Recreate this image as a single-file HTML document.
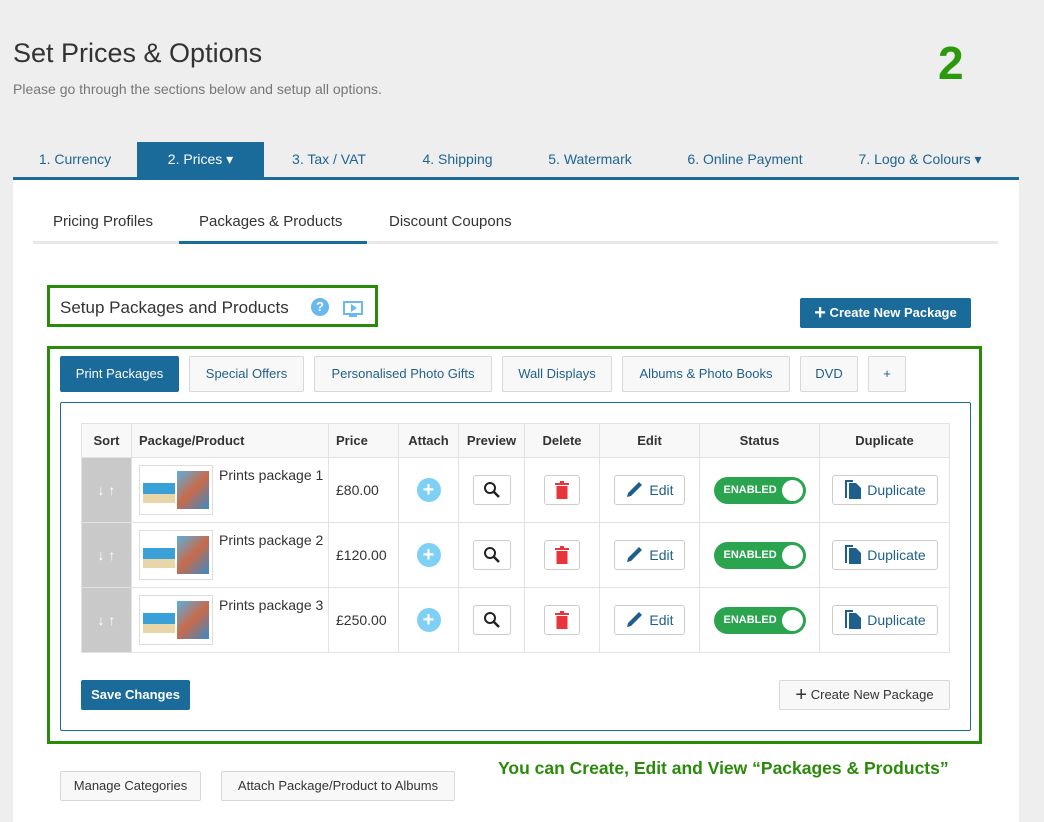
<!DOCTYPE html>
<html><head><meta charset="utf-8"><style>
*{box-sizing:border-box;margin:0;padding:0}
body{width:1044px;height:822px;background:#eeeeee;font-family:"Liberation Sans",sans-serif;position:relative;overflow:hidden;color:#333}
.a{position:absolute}
.tab{position:absolute;top:142px;height:36px;line-height:34px;font-size:14px;color:#1f6493;text-align:center}
.sub{position:absolute;top:212px;font-size:15px;color:#333}
.btn{position:absolute;border:1px solid #d5d8dc;background:#f8f8f8;font-size:13px;color:#1f5f8b;text-align:center;border-radius:2px}
table{border-collapse:collapse;position:absolute;left:81px;top:423px;width:869px}
td,th{border:1px solid #dfe2e6;font-size:13px;text-align:center}
th{height:34px;background:#f8f8f8;color:#333;font-weight:bold}
td{height:65px;background:#fff}
td.s{background:#c9c9c9;color:#fff;font-size:14px}
.wb{display:inline-block;border:1px solid #ccc;border-radius:3px;background:#fff;height:30px;vertical-align:middle;line-height:28px;color:#1f5f8b;font-size:14px}
.tog{display:inline-block;width:92px;height:27px;border-radius:14px;background:#2aa44f;color:#fff;font-size:11px;font-weight:bold;line-height:27px;text-align:left;padding-left:10px;position:relative;vertical-align:middle}
.tog:after{content:"";position:absolute;right:3px;top:3px;width:21px;height:21px;border-radius:50%;background:#fff}
.thumb{position:absolute;left:7px;top:7px;width:74px;height:50px;border:1px solid #ddd;background:#fff}
</style></head><body>
<div class="a" style="left:13px;top:38px;font-size:27px;color:#333">Set Prices &amp; Options</div>
<div class="a" style="left:13px;top:81px;font-size:14px;color:#777">Please go through the sections below and setup all options.</div>
<div class="a" style="left:938px;top:36px;font-size:46px;font-weight:bold;color:#2a9a0a">2</div>

<div class="a" style="left:13px;top:180px;width:1006px;height:642px;background:#fff"></div>
<div class="a" style="left:13px;top:177px;width:1006px;height:3px;background:#1a6a9a"></div>
<div class="tab" style="left:20px;width:110px">1. Currency</div>
<div class="tab" style="left:137px;width:127px;background:#1a6a9a;color:#fff">2. Prices ▾</div>
<div class="tab" style="left:275px;width:108px">3. Tax / VAT</div>
<div class="tab" style="left:405px;width:105px">4. Shipping</div>
<div class="tab" style="left:530px;width:120px">5. Watermark</div>
<div class="tab" style="left:670px;width:150px">6. Online Payment</div>
<div class="tab" style="left:845px;width:150px">7. Logo &amp; Colours ▾</div>

<div class="a" style="left:33px;top:241px;width:965px;height:3px;background:#e8e8e8"></div>
<div class="a" style="left:179px;top:241px;width:188px;height:3px;background:#1a6a9a"></div>
<div class="sub" style="left:53px;top:213px">Pricing Profiles</div>
<div class="sub" style="left:199px;top:213px">Packages &amp; Products</div>
<div class="sub" style="left:389px;top:213px">Discount Coupons</div>

<div class="a" style="left:47px;top:285px;width:331px;height:42px;border:3px solid #2a8a0a"></div>
<div class="a" style="left:60px;top:298px;font-size:17px;color:#333">Setup Packages and Products</div>
<div class="a" style="left:311px;top:298px;width:18px;height:18px;border-radius:50%;background:#6ab8f0;color:#fff;font-size:13px;font-weight:bold;text-align:center;line-height:18px">?</div>
<div class="a" style="left:343px;top:301px;width:20px;height:14px;border:2px solid #6ab8f0"></div>
<div class="a" style="left:351px;top:304px;width:0;height:0;border-left:6px solid #6ab8f0;border-top:4px solid transparent;border-bottom:4px solid transparent"></div>
<div class="a" style="left:349px;top:315px;width:8px;height:2px;background:#6ab8f0"></div>
<div class="a" style="left:800px;top:298px;width:171px;height:30px;background:#1a6a9a;color:#fff;font-size:13px;font-weight:bold;line-height:30px;text-align:center;border-radius:2px"><span style="font-size:20px;vertical-align:-2px">+</span> Create New Package</div>

<div class="a" style="left:47px;top:346px;width:935px;height:398px;border:3px solid #2a8a0a"></div>
<div class="btn" style="left:60px;top:356px;width:119px;height:36px;line-height:34px;background:#1a6a9a;color:#fff;border-color:#1a6a9a">Print Packages</div>
<div class="btn" style="left:189px;top:356px;width:115px;height:36px;line-height:34px">Special Offers</div>
<div class="btn" style="left:314px;top:356px;width:178px;height:36px;line-height:34px">Personalised Photo Gifts</div>
<div class="btn" style="left:502px;top:356px;width:110px;height:36px;line-height:34px">Wall Displays</div>
<div class="btn" style="left:622px;top:356px;width:168px;height:36px;line-height:34px">Albums &amp; Photo Books</div>
<div class="btn" style="left:800px;top:356px;width:58px;height:36px;line-height:34px">DVD</div>
<div class="btn" style="left:868px;top:356px;width:38px;height:36px;line-height:34px">+</div>

<div class="a" style="left:60px;top:402px;width:911px;height:329px;border:1px solid #1a6a9a;border-radius:2px"></div>

<table>
<tr><th style="width:50px">Sort</th><th style="width:197px;text-align:left;padding-left:7px">Package/Product</th><th style="width:70px;text-align:left;padding-left:7px">Price</th><th style="width:60px">Attach</th><th style="width:66px">Preview</th><th style="width:75px">Delete</th><th style="width:100px">Edit</th><th style="width:120px">Status</th><th>Duplicate</th></tr>
<tr><td class="s">↓ ↑</td><td style="position:relative;text-align:left"><div class="thumb"><div class="a" style="left:3px;top:17px;width:32px;height:20px;background:linear-gradient(#3aa0d8 55%,#e8d6a8 55%)"></div><div class="a" style="left:37px;top:5px;width:32px;height:38px;background:linear-gradient(135deg,#5ab0e0,#c86a4a 50%,#3a8ac8)"></div></div><span class="a" style="left:87px;top:9px;font-size:14px">Prints package 1</span></td><td style="text-align:left;padding-left:7px;font-size:14px">£80.00</td><td><span style="display:inline-block;width:24px;height:24px;border-radius:50%;background:#7fd0f5;color:#fff;font-weight:bold;font-size:20px;line-height:24px">+</span></td><td><span class="wb" style="width:38px"><svg width="18" height="18" viewBox="0 0 18 18" style="vertical-align:-4px"><circle cx="7" cy="7" r="5" fill="none" stroke="#222" stroke-width="2"/><path d="M11 11l5 5" stroke="#222" stroke-width="2.5"/></svg></span></td><td><span class="wb" style="width:36px"><svg width="14" height="18" viewBox="0 0 14 18" style="vertical-align:-4px"><rect x="0" y="2" width="14" height="2" fill="#e8343a"/><rect x="5" y="0" width="4" height="3" fill="#e8343a"/><rect x="1.5" y="5" width="11" height="13" fill="#e8343a"/></svg></span></td><td><span class="wb" style="width:71px"><svg width="20" height="18" viewBox="0 0 20 18" style="vertical-align:-3px"><path d="M2 17l1-4L14 2l3 3L6 16z" fill="#1f5f8b"/></svg> Edit</span></td><td><span class="tog">ENABLED</span></td><td><span class="wb" style="width:106px"><svg width="20" height="20" viewBox="0 0 20 20" style="vertical-align:-4px"><path d="M2 1h8v2H4v16H2z" fill="#1f5f8b"/><path d="M6 4h7l5 5v11H6z" fill="#1f5f8b"/></svg> Duplicate</span></td></tr>
<tr><td class="s">↓ ↑</td><td style="position:relative;text-align:left"><div class="thumb"><div class="a" style="left:3px;top:17px;width:32px;height:20px;background:linear-gradient(#3aa0d8 55%,#e8d6a8 55%)"></div><div class="a" style="left:37px;top:5px;width:32px;height:38px;background:linear-gradient(135deg,#5ab0e0,#c86a4a 50%,#3a8ac8)"></div></div><span class="a" style="left:87px;top:9px;font-size:14px">Prints package 2</span></td><td style="text-align:left;padding-left:7px;font-size:14px">£120.00</td><td><span style="display:inline-block;width:24px;height:24px;border-radius:50%;background:#7fd0f5;color:#fff;font-weight:bold;font-size:20px;line-height:24px">+</span></td><td><span class="wb" style="width:38px"><svg width="18" height="18" viewBox="0 0 18 18" style="vertical-align:-4px"><circle cx="7" cy="7" r="5" fill="none" stroke="#222" stroke-width="2"/><path d="M11 11l5 5" stroke="#222" stroke-width="2.5"/></svg></span></td><td><span class="wb" style="width:36px"><svg width="14" height="18" viewBox="0 0 14 18" style="vertical-align:-4px"><rect x="0" y="2" width="14" height="2" fill="#e8343a"/><rect x="5" y="0" width="4" height="3" fill="#e8343a"/><rect x="1.5" y="5" width="11" height="13" fill="#e8343a"/></svg></span></td><td><span class="wb" style="width:71px"><svg width="20" height="18" viewBox="0 0 20 18" style="vertical-align:-3px"><path d="M2 17l1-4L14 2l3 3L6 16z" fill="#1f5f8b"/></svg> Edit</span></td><td><span class="tog">ENABLED</span></td><td><span class="wb" style="width:106px"><svg width="20" height="20" viewBox="0 0 20 20" style="vertical-align:-4px"><path d="M2 1h8v2H4v16H2z" fill="#1f5f8b"/><path d="M6 4h7l5 5v11H6z" fill="#1f5f8b"/></svg> Duplicate</span></td></tr>
<tr><td class="s">↓ ↑</td><td style="position:relative;text-align:left"><div class="thumb"><div class="a" style="left:3px;top:17px;width:32px;height:20px;background:linear-gradient(#3aa0d8 55%,#e8d6a8 55%)"></div><div class="a" style="left:37px;top:5px;width:32px;height:38px;background:linear-gradient(135deg,#5ab0e0,#c86a4a 50%,#3a8ac8)"></div></div><span class="a" style="left:87px;top:9px;font-size:14px">Prints package 3</span></td><td style="text-align:left;padding-left:7px;font-size:14px">£250.00</td><td><span style="display:inline-block;width:24px;height:24px;border-radius:50%;background:#7fd0f5;color:#fff;font-weight:bold;font-size:20px;line-height:24px">+</span></td><td><span class="wb" style="width:38px"><svg width="18" height="18" viewBox="0 0 18 18" style="vertical-align:-4px"><circle cx="7" cy="7" r="5" fill="none" stroke="#222" stroke-width="2"/><path d="M11 11l5 5" stroke="#222" stroke-width="2.5"/></svg></span></td><td><span class="wb" style="width:36px"><svg width="14" height="18" viewBox="0 0 14 18" style="vertical-align:-4px"><rect x="0" y="2" width="14" height="2" fill="#e8343a"/><rect x="5" y="0" width="4" height="3" fill="#e8343a"/><rect x="1.5" y="5" width="11" height="13" fill="#e8343a"/></svg></span></td><td><span class="wb" style="width:71px"><svg width="20" height="18" viewBox="0 0 20 18" style="vertical-align:-3px"><path d="M2 17l1-4L14 2l3 3L6 16z" fill="#1f5f8b"/></svg> Edit</span></td><td><span class="tog">ENABLED</span></td><td><span class="wb" style="width:106px"><svg width="20" height="20" viewBox="0 0 20 20" style="vertical-align:-4px"><path d="M2 1h8v2H4v16H2z" fill="#1f5f8b"/><path d="M6 4h7l5 5v11H6z" fill="#1f5f8b"/></svg> Duplicate</span></td></tr>
</table>

<div class="a" style="left:81px;top:680px;width:109px;height:30px;background:#1a6a9a;color:#fff;font-size:13px;font-weight:bold;line-height:30px;text-align:center;border-radius:2px">Save Changes</div>
<div class="btn" style="left:779px;top:680px;width:171px;height:30px;line-height:28px;color:#333"><span style="font-size:20px;vertical-align:-2px">+</span> Create New Package</div>

<div class="a" style="left:498px;top:758px;font-size:17.5px;font-weight:bold;color:#2a8a0a;white-space:nowrap">You can Create, Edit and View “Packages &amp; Products”</div>
<div class="btn" style="left:60px;top:771px;width:141px;height:30px;line-height:28px;color:#333">Manage Categories</div>
<div class="btn" style="left:221px;top:771px;width:234px;height:30px;line-height:28px;color:#333">Attach Package/Product to Albums</div>
</body></html>
